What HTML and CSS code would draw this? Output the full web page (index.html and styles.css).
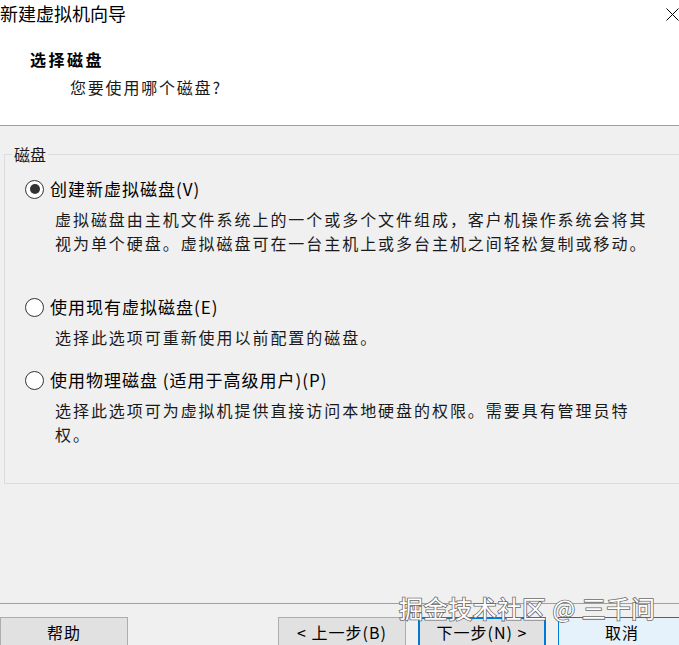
FILE: index.html
```html
<!DOCTYPE html>
<html lang="zh-CN">
<head>
<meta charset="utf-8">
<title>新建虚拟机向导</title>
<link rel="stylesheet" href="styles.css">
</head>
<body>
<div class="dialog">
  <header class="header">
    <div class="titlebar">
      <span class="title">新建虚拟机向导</span>
      <svg class="close" width="13" height="13" viewBox="0 0 13 13" aria-hidden="true"><path d="M0.5 0.5 L12.5 12.5 M12.5 0.5 L0.5 12.5" stroke="#000" stroke-width="1" fill="none"/></svg>
    </div>
    <div class="heading">选择磁盘</div>
    <div class="subheading">您要使用哪个磁盘?</div>
  </header>

  <main class="content">
    <fieldset class="group">
      <legend class="group-label">磁盘</legend>

      <div class="option option-first">
        <div class="option-label"><span class="radio radio-checked"></span><span>创建新虚拟磁盘(V)</span></div>
        <div class="desc desc-tall">虚拟磁盘由主机文件系统上的一个或多个文件组成，客户机操作系统会将其<br>视为单个硬盘。虚拟磁盘可在一台主机上或多台主机之间轻松复制或移动。</div>
      </div>

      <div class="option">
        <div class="option-label"><span class="radio"></span><span>使用现有虚拟磁盘(E)</span></div>
        <div class="desc">选择此选项可重新使用以前配置的磁盘。</div>
      </div>

      <div class="option">
        <div class="option-label"><span class="radio"></span><span>使用物理磁盘 (适用于高级用户)(P)</span></div>
        <div class="desc">选择此选项可为虚拟机提供直接访问本地硬盘的权限。需要具有管理员特<br>权。</div>
      </div>
    </fieldset>
  </main>

  <footer class="footer">
    <button class="btn">帮助</button>
    <div class="btn-group">
      <button class="btn">&lt; 上一步(B)</button>
      <button class="btn btn-default">下一步(N) &gt;</button>
      <button class="btn btn-hover">取消</button>
    </div>
  </footer>

  <div class="watermark">掘金技术社区 @ 三千问</div>
</div>
</body>
</html>
```

FILE: styles.css
```css
html, body {
  margin: 0;
  padding: 0;
}
body {
  width: 679px;
  height: 645px;
  overflow: hidden;
  background: #f0f0f0;
  font-family: "Noto Sans CJK SC", "Noto Sans", sans-serif;
  color: #000;
}
.dialog {
  position: relative;
  width: 692px;
  height: 645px;
  background: #f0f0f0;
}
.header {
  height: 125px;
  background: #fff;
  border-bottom: 1px solid #a0a0a0;
}
.titlebar {
  display: flex;
  justify-content: space-between;
  align-items: flex-start;
  height: 26px;
}
.title {
  font-size: 18px;
  line-height: 26px;
}
.close {
  margin-top: 8px;
  margin-right: 13px;
}
.heading {
  margin-top: 21px;
  padding-left: 30px;
  font-size: 16px;
  font-weight: bold;
  letter-spacing: 2.5px;
  line-height: 24px;
}
.subheading {
  margin-top: 4px;
  padding-left: 70px;
  font-size: 16px;
  letter-spacing: 1.8px;
  line-height: 24px;
  color: #1a1a1a;
}
.content {
  padding: 0 4px;
}
.group {
  margin: 18px 0 0 0;
  padding: 0 0 37px 20px;
  border: 1px solid #dcdcdc;
  min-width: 0;
}
.group-label {
  margin-left: -13px;
  padding: 0 2px;
  font-size: 16px;
  line-height: 20px;
  color: #1a1a1a;
}
.option {
  margin-top: 19px;
}
.option-first {
  margin-top: 13px;
}
.option-label {
  display: flex;
  align-items: center;
  gap: 6px;
  height: 24px;
  font-size: 17px;
  letter-spacing: 1px;
  line-height: 24px;
}
.radio {
  box-sizing: border-box;
  width: 19px;
  height: 19px;
  border: 1px solid #333;
  border-radius: 50%;
  background: #fff;
  display: flex;
  align-items: center;
  justify-content: center;
  flex: none;
}
.radio-checked::after {
  content: "";
  width: 10px;
  height: 10px;
  border-radius: 50%;
  background: #333;
}
.desc {
  margin-top: 6px;
  padding-left: 30px;
  font-size: 16px;
  letter-spacing: 1.95px;
  line-height: 24px;
  color: #1a1a1a;
  white-space: nowrap;
}
.desc-tall {
  padding-bottom: 21px;
}
.footer {
  margin-top: 119px;
  border-top: 1px solid #a0a0a0;
  padding: 13px 6px 0 0;
  display: flex;
  justify-content: space-between;
}
.btn-group {
  display: flex;
  gap: 12px;
}
.btn {
  box-sizing: border-box;
  width: 128px;
  height: 30px;
  margin: 0;
  padding: 0;
  background: #e1e1e1;
  border: 1px solid #adadad;
  font-family: "Noto Sans CJK SC", "Noto Sans", sans-serif;
  font-size: 16px;
  letter-spacing: 1px;
  line-height: 26px;
  color: #000;
}
.btn-default {
  border: 2px solid #0078d7;
}
.btn-hover {
  background: #e5f1fb;
  border: 1px solid #0078d7;
}
.watermark {
  position: absolute;
  left: 399px;
  top: 593px;
  font-size: 24px;
  line-height: 30px;
  letter-spacing: 0.6px;
  color: #fff;
  -webkit-text-stroke: 1.6px #6a6a6a;
  paint-order: stroke fill;
  white-space: nowrap;
}
```
